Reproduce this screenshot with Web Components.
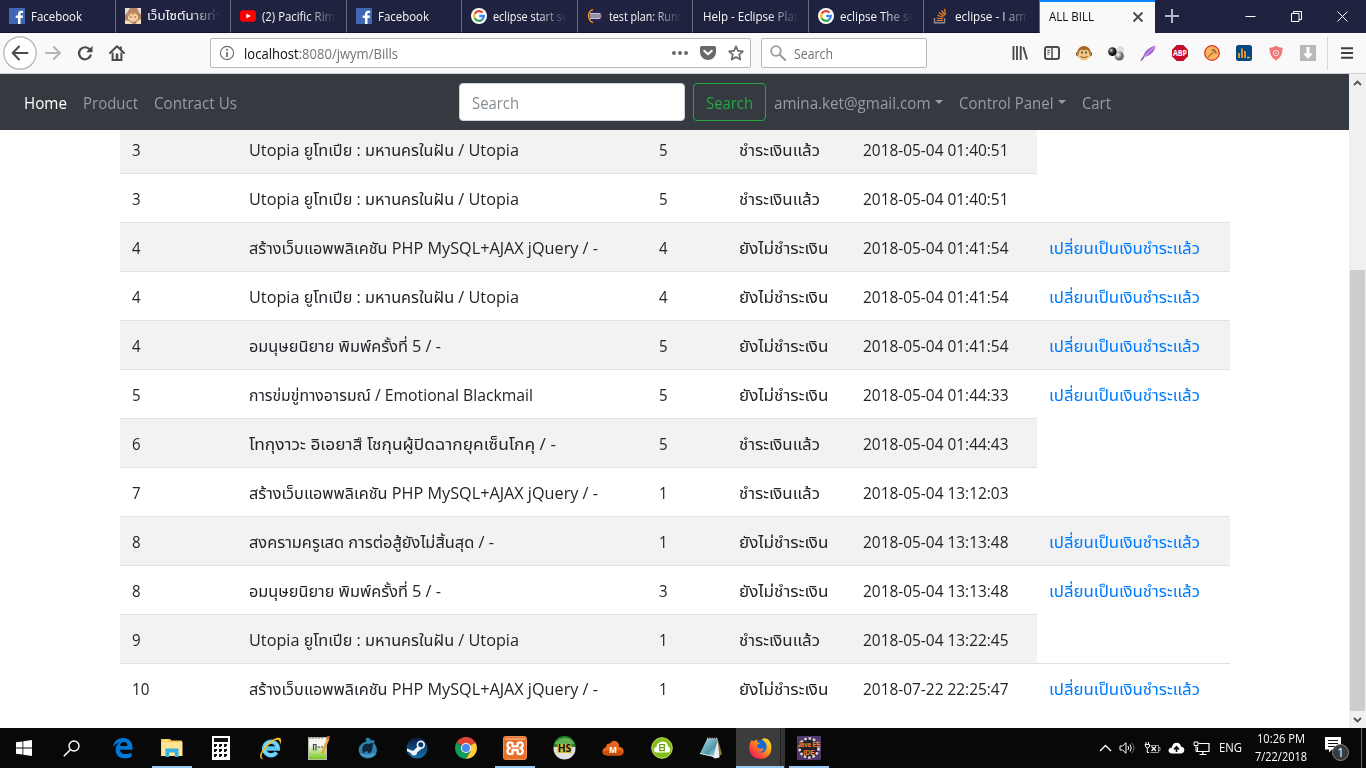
<!DOCTYPE html>
<html lang="th">
<head>
<meta charset="utf-8">
<title>ALL BILL</title>
<style>
html,body{margin:0;height:100%;overflow:hidden;background:#fff}
body{font-family:"Open Sans","Noto Sans","Noto Sans Thai",sans-serif}
</style>
</head>
<body>
<app-desktop></app-desktop>
<script>
const G = '<circle cx="8" cy="8" r="8" fill="#fff"/><g fill="none" stroke-width="2.3"><path d="M11.5 4.6A4.9 4.9 0 0 0 3.7 5.7" stroke="#ea4335"/><path d="M3.7 5.7a4.9 4.9 0 0 0 0 4.6" stroke="#fbbc05"/><path d="M3.7 10.3a4.9 4.9 0 0 0 7.5 1.3" stroke="#34a853"/><path d="M11.2 11.6A4.8 4.8 0 0 0 12.8 8H8.2" stroke="#4285f4"/></g>';
const FB = '<rect width="16" height="16" fill="#4267b2"/><path d="M9 16V10H6.700V7.600H9V6c0-2.100 1.300-3.300 3.300-3.300.8 0 1.400.1 1.800.1V5h-1.300c-1 0-1.300.4-1.300 1.200v1.400H14L13.600 10h-2.100v6z" fill="#fff"/>';
// name: [width, height, viewBox, markup]
const ICONS = {
 fb:[16,16,'0 0 16 16',FB],
 google:[16,16,'0 0 16 16',G],
 girl:[16,16,'0 0 16 16','<rect width="16" height="16" fill="#b98262"/><path d="M0 0h5L2 5 0 7z M16 0h-4l3 6h1z" fill="#e9ded4"/><path d="M3 6q5-5 10 0v5q-5 6-10 0z" fill="#f3cf9d"/><path d="M3 8q0-6 5-6t5 6l-3-3-2 2-2-2-3 4z" fill="#bd8560"/><path d="M5 9h1.500M9.500 9H11" stroke="#663c2c" stroke-width="1.200"/><path d="M0 12l4 1 4 3H0z M16 11l-4 2-1 3h5z" fill="#eee0c0"/>'],
 yt:[16,16,'0 0 16 16','<rect y="2.200" width="16" height="11.600" rx="3" fill="#f00"/><path d="M6.300 5.400L10.800 8l-4.500 2.600z" fill="#fff"/>'],
 ecl:[16,16,'0 0 16 16','<path d="M6 1.500A7 7 0 0 0 6 14.500" fill="none" stroke="#f7941e" stroke-width="1.500"/><circle cx="8.700" cy="8" r="6.300" fill="#2c2255"/><path d="M3 5.800h10.500M2.500 8h12M3 10.200h10.500" stroke="#fff" stroke-width="1.200"/>'],
 so:[16,16,'0 0 16 16','<path d="M1.500 10v4.800h10V10" fill="none" stroke="#8b8f93" stroke-width="1.400"/><path d="M3.500 12.500h6.200M3.700 10l6 .8M4.400 7.300l5.700 2M6 4.500l4.800 3.800M8.500 2.400l3.400 5M11.500 .8l1 5.800" stroke="#f48024" stroke-width="1.200"/>'],
 close:[12,12,'0 0 12 12','<path d="M1.500 1.500l9 9M10.500 1.500l-9 9" stroke="#4a4a4f" stroke-width="1.800"/>'],
 plus:[16,16,'0 0 16 16','<path d="M8 1v14M1 8h14" stroke="#b9b9c5" stroke-width="2"/>'],
 min:[11,11,'0 0 11 11','<path d="M.5 5.500h10" stroke="#fff"/>'],
 restore:[11,11,'0 0 11 11','<path d="M.5 2.500h7.500v8H.5zM2.500 2.500v-2h8v8H8" fill="none" stroke="#fff"/>'],
 wclose:[11,11,'0 0 11 11','<path d="M.5.5l10 10M10.500.5l-10 10" stroke="#fff" stroke-width="1"/>'],
 back:[34,34,'0 0 34 34','<circle cx="17" cy="17" r="16.200" fill="#fff" stroke="#b1b1b3" stroke-width="1.200"/><path d="M24.500 17H10M16 10.500L9.700 17l6.300 6.500" fill="none" stroke="#4a4a4f" stroke-width="2" stroke-linecap="round" stroke-linejoin="round"/>'],
 fwd:[16,16,'0 0 16 16','<path d="M1 8h13.500M8.800 2L15 8l-6.200 6" fill="none" stroke="#b5b5b7" stroke-width="2" stroke-linecap="round" stroke-linejoin="round"/>'],
 reload:[16,16,'0 0 16 16','<path d="M12.800 4.600A6 6 0 1 0 13.900 9.500" fill="none" stroke="#4a4a4f" stroke-width="2.200"/><path d="M15.500.8v6.400H9.200z" fill="#4a4a4f"/>'],
 home:[16,16,'0 0 16 16','<path d="M1 8L8 1.300 15 8" fill="none" stroke="#4a4a4f" stroke-width="2" stroke-linecap="round" stroke-linejoin="round"/><path d="M3.600 7.500v7.500h8.800V7.500M11.800 1.500v3" fill="none" stroke="#4a4a4f" stroke-width="2"/><path d="M6.700 8.500h2.600v6H6.700z" fill="#4a4a4f"/>'],
 info:[16,16,'0 0 16 16','<circle cx="8" cy="8" r="6.600" fill="none" stroke="#6a6a6c" stroke-width="1.100"/><path d="M8 7v5" stroke="#6a6a6c" stroke-width="1.700"/><circle cx="8" cy="4.700" r="1" fill="#6a6a6c"/>'],
 dots:[16,16,'0 0 16 16','<g fill="#68686a"><circle cx="2" cy="8" r="2"/><circle cx="8" cy="8" r="2"/><circle cx="14" cy="8" r="2"/></g>'],
 pocket:[16,16,'0 0 16 16','<path d="M1.500 1h13Q16 1 16 2.500V7a8 8 0 0 1-16 0V2.500Q0 1 1.500 1z" fill="#68686a"/><path d="M4.200 5.700L8 9.300l3.800-3.600" fill="none" stroke="#fff" stroke-width="2" stroke-linecap="round" stroke-linejoin="round"/>'],
 star:[16,16,'0 0 16 16','<path d="M8 1.300l2 4.500 4.900.5-3.700 3.300 1.100 4.900L8 12l-4.300 2.500 1.100-4.900L1.100 6.300 6 5.800z" fill="none" stroke="#68686a" stroke-width="1.700" stroke-linejoin="round"/>'],
 mag:[16,16,'0 0 16 16','<circle cx="6" cy="6" r="4.800" fill="none" stroke="#9a9a9c" stroke-width="1.800"/><path d="M9.500 9.500l5.700 5.500" stroke="#9a9a9c" stroke-width="2" stroke-linecap="round"/>'],
 lib:[16,16,'0 0 16 16','<path d="M1.500 1v14M5 1v14M8.700 1v14M11.300 2l3.700 12.600" stroke="#4a4a4f" stroke-width="1.900"/>'],
 side:[16,16,'0 0 16 16','<rect x="1" y="2" width="14" height="12" rx="2.200" fill="none" stroke="#4a4a4f" stroke-width="2"/><path d="M8 2v12" stroke="#4a4a4f" stroke-width="1.500"/><path d="M3.300 5.200H6M3.300 7.300H6M3.300 9.400H5" stroke="#4a4a4f"/>'],
 monkey:[16,16,'0 0 16 16','<circle cx="2.300" cy="9" r="2" fill="#d99b55" stroke="#80501c"/><circle cx="13.700" cy="9" r="2" fill="#d99b55" stroke="#80501c"/><circle cx="8" cy="7.500" r="6.600" fill="#a8692a"/><path d="M3.200 6.500q1.500-3 4.800-1 3.300-2 4.800 1l1.200 4.500q-1.500 4.500-6 4.500T2 11z" fill="#f0c98a"/><path d="M6 6.500v2M10 6.500v2" stroke="#333" stroke-width="1.500"/><path d="M4.500 11.500q3.500 2.500 7 0" fill="none" stroke="#8c501c"/>'],
 balls:[16,16,'0 0 16 16','<defs><radialGradient id="a" cx=".35" cy=".35"><stop stop-color="#ddd"/><stop offset=".5" stop-color="#444"/><stop offset="1" stop-color="#111"/></radialGradient><radialGradient id="b" cx=".35" cy=".35"><stop stop-color="#fff"/><stop offset="1" stop-color="#666"/></radialGradient></defs><circle cx="12.500" cy="4.500" r="3.500" fill="#ddd"/><circle cx="11.300" cy="11" r="4.600" fill="url(#b)"/><circle cx="4.400" cy="6.600" r="4.300" fill="url(#a)"/>'],
 feather:[16,16,'0 0 16 16','<path d="M15.500.5Q15 6 11 9t-8 3.500Q4 7 8 4t7.500-3.500z" fill="#a367cf"/><path d="M1 15.500L14.500 1.500" stroke="#e0bcf5"/><path d="M1 15.500l3-3.800" stroke="#7843a8" stroke-width="1.300"/>'],
 abp:[16,16,'0 0 16 16','<path d="M4.700 0h6.600L16 4.700v6.600L11.300 16H4.700L0 11.300V4.700z" fill="#c70d2c" /><text x="8" y="11" text-anchor="middle" textLength="14" lengthAdjust="spacingAndGlyphs" font-size="8.200" font-weight="700" fill="#fff">ABP</text>'],
 hammer:[16,16,'0 0 16 16','<circle cx="8" cy="8" r="7.300" fill="#fcb65a" stroke="#d93831" stroke-width="1.300"/><path d="M4 12l6-5.500" stroke="#b47b3d" stroke-width="1.500"/><path d="M7.500 5.300l2.500-.6 2.500 3.800" fill="none" stroke="#9b6c41" stroke-width="1.600"/>'],
 stats:[16,16,'0 0 16 16','<rect width="16" height="16" rx="2.500" fill="#064682"/><path d="M3 13V8M6 13V3.500M9 13V6M11 12.500h3" stroke="#ffa41b" stroke-width="1.700"/>'],
 shield:[16,16,'0 0 16 16','<path d="M8 .8q3 2 6.500 2Q15 11.500 8 15.500 1 11.500 1.500 2.800 5 2.800 8 .8z" fill="#f27778"/><circle cx="8" cy="8" r="2.800" fill="none" stroke="#fbd5d5"/><path d="M6.500 6.500l3 3" stroke="#fbd5d5"/>'],
 down:[16,16,'0 0 16 16','<rect width="16" height="16" fill="#b8b8b8"/><path d="M6.500 2h3v6.500H13L8 14 3 8.500h3.500z" fill="#fff"/>'],
 menu:[14,14,'0 0 14 14','<path d="M1 2.200h12M1 7h12M1 11.800h12" stroke="#3f3f43" stroke-width="2"/>'],
 up:[9,6,'0 0 9 6','<path d="M1 5l3.500-3.400L8 5" fill="none" stroke="#505050" stroke-width="1.800"/>'],
 dn:[9,6,'0 0 9 6','<path d="M1 1l3.500 3.400L8 1" fill="none" stroke="#505050" stroke-width="1.800"/>'],
 win:[16,16,'0 0 16 16','<path d="M0 2.300l6.500-.9v6.200H0zM7.300 1.300L16 0v7.600H7.300zM0 8.400h6.500v6.200L0 13.700zM7.300 8.400H16V16l-8.700-1.300z" fill="#fff"/>'],
 find:[17,17,'0 0 17 17','<circle cx="11" cy="6" r="5" fill="none" stroke="#fff" stroke-width="1.400"/><path d="M7.300 9.700L.8 16.200" stroke="#fff" stroke-width="1.500"/>'],
 edge:[22,22,'0 0 22 22','<path d="M1 10.200C1.600 4.800 5.200 1 11.200 1c5.800 0 9.300 4 9.300 9.300v2.400H8c.2 3 2.600 4.400 5.600 4.400 2.200 0 4.200-.6 5.900-1.700v4.300c-1.900 1.100-4.200 1.600-6.600 1.600-5.500 0-9.300-3-9.300-8.400 0-3.400 1.900-6.300 5-7.800C5.500 5.900 2.800 7.300 1 10.200zM8.100 8.900h7.300c0-2.200-1.100-3.800-3.500-3.800-2.300 0-3.600 1.800-3.800 3.800z" fill="#0078d7"/>'],
 folder:[22,20,'0 0 22 20','<path d="M0 1h9l1.500 1.500H21V18H0z" fill="#f5c84c"/><path d="M.5 4h21v14H.5z" fill="#ffe594"/><path d="M2 2.300h5" stroke="#fff2bd"/><path d="M4.500 19v-8.500h13V19h-3.700v-4.500H8.200V19z" fill="#35b2e5"/>'],
 calc:[18,24,'0 0 18 24','<rect width="18" height="24" fill="#fff"/><path d="M2 2h14v4H2z" fill="#111"/><g fill="#111"><path d="M2 8h3v2H4v1H2zM7 8h3v2H9v1H7zM12 8h3v2h-1v1h-2zM2 13h3v2H4v1H2zM7 13h3v2H9v1H7zM12 13h3v2h-1v1h-2zM2 18h3v2H4v1H2zM7 18h3v2H9v1H7zM12 18h3v2h-1v1h-2z"/></g>'],
 ie:[23,23,'0 0 23 23','<path d="M17.500 15.500a6.800 6.800 0 1 1 1.300-4H7" fill="none" stroke="#5bc7f4" stroke-width="4.400"/><path d="M17.500 15.500a6.800 6.800 0 1 1 1.300-4" fill="none" stroke="#a9e4fb" stroke-width="1"/><path d="M4 22.500Q-2 21 4 12 11 3 18 .8q5-1 4 4-.5 2-1 3 .3-5-3-5Q14 3.300 7 11T4 22.500z" fill="#f5bd1d"/>'],
 npp:[22,24,'0 0 22 24','<defs><linearGradient id="n" x2="0" y2="1"><stop offset=".35" stop-color="#f4f6ee"/><stop offset="1" stop-color="#72cb11"/></linearGradient></defs><rect x=".5" y="1.500" width="18" height="22" fill="url(#n)" stroke="#b8bcb0"/><path d="M2 1v2M5 1v2M8 1v2M11 1v2M14 1v2" stroke="#777"/><path d="M5.500 14.500V8M5.500 8.500h2.500v6M9.500 11h2.500M13 11h2" stroke="#444" stroke-width="1.200" fill="none"/><path d="M20.500 2l-6.500 16" stroke="#e8a532" stroke-width="2.500"/><path d="M20.600 0l-.8 3" stroke="#d85a50" stroke-width="2.600"/>'],
 water:[20,22,'0 0 20 22','<path d="M3.500 7Q0 10 .8 14.500 3 21.500 10 21.500q8.500-.5 9-8.500 0-4-3-7 1-1 0-3-2 1-3.500-.5Q10-.5 7.500 2q1 1 .8 2.500Q5 5 3.500 7z" fill="#2c83ad"/><path d="M5 9q2-3 5.500-2 2.500-1.200 5-1-1 2-1 4.500-.5 5.500-4 5.500-1 0-1-2-3 0-4 2.500Q3 13 5 9z" fill="#10263b"/><path d="M3 17q6 4 14 0" fill="none" stroke="#58a9ca" stroke-width="1.500"/>'],
 steam:[22,22,'0 0 22 22','<defs><linearGradient id="s" x2="0" y2="1"><stop stop-color="#071a3d"/><stop offset="1" stop-color="#1772ad"/></linearGradient></defs><circle cx="11" cy="11" r="10.600" fill="url(#s)"/><circle cx="14.800" cy="7.800" r="3.400" fill="none" stroke="#eef3f8" stroke-width="1.700"/><path d="M1 11.500l6 2.500 5.300-5L16 11.500l-5 4q0 3-3 3-2.400 0-3.200-2.500L1 14.300z" fill="#eef3f8"/>'],
 chrome:[22,22,'0 0 22 22','<path d="M11 11L1.500 5.500A11 11 0 0 1 20.500 5.500z" fill="#e04436"/><path d="M11 11L1.500 5.500A11 11 0 0 0 11 22l4.500-8z" fill="#139b58"/><path d="M11 11L20.500 5.500A11 11 0 0 1 11 22l4.500-8z" fill="#fbce3c"/><path d="M11 6h9.800" stroke="#e04436"/><circle cx="11" cy="11" r="5.100" fill="#f5f5f5"/><circle cx="11" cy="11" r="4" fill="#4688f1"/>'],
 xampp:[24,24,'0 0 24 24','<rect x=".5" y=".5" width="23" height="23" rx="2" fill="#e8702a" stroke="#f08c50"/><path d="M2 3h20" stroke="#f8b084" stroke-width="1.500"/><path d="M9.500 7Q4.500 5 4.500 9q0 2.500 2.300 3.200Q4.500 13 4.500 15.500q0 3.500 5 2.200V14h5.200v3.700q5 1.300 5-2.200 0-2.500-2.400-3.300Q19.700 11.500 19.700 9q0-4-5-2v3.400H9.500z" fill="none" stroke="#fff" stroke-width="2.300" stroke-linejoin="round"/>'],
 hs:[23,23,'0 0 23 23','<circle cx="11.500" cy="11.500" r="11" fill="#dfe0df"/><path d="M.5 10a11 11 0 0 1 22 0z" fill="#258426"/><path d="M1.500 7Q5 1.500 11.500 1T21.500 7z" fill="#65b356"/><path d="M4.500 7h14v9h-14z" fill="#d8b934"/><text x="11.500" y="15.300" text-anchor="middle" textLength="13.500" lengthAdjust="spacingAndGlyphs" font-size="10.500" font-weight="700" fill="#111">HS</text>'],
 moo:[22,18,'0 0 22 18','<path d="M5 16.500Q0 16 .5 12 .8 9 4 8.200 4 4.500 8 4.600 10 .8 14 2.200q3.300 1.300 3 5.500 4.600.5 4.700 4.500t-4 4.300z" fill="#e5671d"/><path d="M1 12.500q8-2 20 0 0 4-4 4H5Q1.500 16 1 12.500z" fill="#ca4d10"/><text x="11" y="13.500" text-anchor="middle" font-size="8.500" font-weight="700" fill="#fff">M</text>'],
 bs:[22,22,'0 0 22 22','<circle cx="11" cy="11" r="10.300" fill="#82bd18" stroke="#bce261"/><path d="M5.500 15.500Q2.500 15 3 12.300q.5-2.300 2.500-2.300 0-4 3.500-4.500 2-1.500 5-.5T17 9.500q2.300.5 2.200 3.200Q19 15.500 16.500 15.500z" fill="#fff"/><path d="M8.700 7.500h4.600V13.700H8.700zM8.700 10.600h4.600" fill="none" stroke="#619e08" stroke-width="1.200"/>'],
 note:[24,24,'0 0 24 24','<defs><linearGradient id="p" x2="1" y2="1"><stop stop-color="#b5e2ee"/><stop offset=".6" stop-color="#4f97aa"/><stop offset="1" stop-color="#c8e8ed"/></linearGradient></defs><path d="M19 4l4 14-5 4z" fill="#8e7146"/><path d="M18.500 3.500l2 18-4.500 1-3-2z" fill="#e9eef0"/><path d="M8 3h11l-4.500 17.500L1 17.500z" fill="url(#p)"/><path d="M8 2.500h11" stroke="#c1c7ca" stroke-width="1.600" stroke-dasharray="1.500 .7"/><path d="M1 17.500l13.500 3" stroke="#ddeef2"/>'],
 ff:[24,24,'0 0 24 24','<defs><linearGradient id="f" x1="1" x2="0" y2="1"><stop stop-color="#fff235"/><stop offset=".4" stop-color="#ff9a16"/><stop offset=".75" stop-color="#ff3344"/><stop offset="1" stop-color="#e60b85"/></linearGradient></defs><circle cx="12.500" cy="12" r="8" fill="#1868d8"/><path d="M3.500 4q1 1 2.500 1.300Q7.500 3.500 9.500 3.500q-1 1.500-.5 2.500l3 1.500-3 1.500q-.5 3 3 3.700 2.500.5 4-1-1 4.500-5 4 3 2 6-.5 3-4 .5-8.500-1-2-4-3 2-2.500 6-.7 3.500 2.500 4 8Q23.300 22.500 12.500 23 2 22.500 1.200 12.500 1 7.500 3.500 4z" fill="url(#f)"/>'],
 jee:[24,24,'0 0 24 24','<rect width="24" height="24" rx="1" fill="#53376d"/><circle cx="12" cy="12" r="9.500" fill="#222" stroke="#d7d7dc" stroke-width="2.600" stroke-dasharray="2.600 1.800"/><path d="M1 6h22v5.500H1zM6 12h12v6H6z" fill="#2a2030" opacity=".7"/><g font-family="Liberation Sans" font-weight="700" fill="#f28a25" text-anchor="middle"><text x="12" y="10.800" textLength="23" lengthAdjust="spacingAndGlyphs" font-size="6.400">Java EE</text><text x="12" y="18.500" textLength="11.500" lengthAdjust="spacingAndGlyphs" font-size="6.400">IDE</text></g>'],
 chev:[13,8,'0 0 13 8','<path d="M1 7l5.500-5.500L12 7" fill="none" stroke="#fff" stroke-width="1.400"/>'],
 vol:[17,14,'0 0 17 14','<path d="M1 5h2.500L7 1.700v10.600L3.500 9H1z" fill="none" stroke="#fff"/><path d="M9 5q1.300 2 0 4M11 3.500q2.500 3.500 0 7" fill="none" stroke="#fff"/><path d="M13 2q4 5 0 10" fill="none" stroke="#777"/>'],
 bat:[17,14,'0 0 17 14','<path d="M2 1v2M4.500 1v2M1 3.500h4.500V5q0 1.500-2 2-2-.5-2-2zM3.300 7v4.500H5" fill="none" stroke="#fff"/><path d="M6.500 4.500h8v7h-8M14.500 6.500h1.500v3h-1.500" fill="none" stroke="#999"/><path d="M7.500 5.500l4.500 4.500M12 5.500L7.500 10" stroke="#fff" stroke-width="1.200"/>'],
 cloud:[17,12,'0 0 17 12','<path d="M4 11.500Q.5 11.300.5 8.300 1 5.500 4 5.500 4.500 1 8.500.8q4 .2 4.500 4 3.300.3 3.300 3.500-.2 3-3.500 3.200z" fill="#fff"/><path d="M8.500 10V6M6 7.500l2.500-2.700L11 7.500" stroke="#111" fill="none" stroke-width="1.700"/>'],
 net:[17,14,'0 0 17 14','<path d="M5.500 2.500h10.500v8H4.500V6M9.800 10.500v3M6.500 13.500h7" fill="none" stroke="#fff" stroke-width="1.200"/><path d="M1 1h4v3.500H1zM3 4.500v6h2" fill="none" stroke="#fff"/>'],
 msg:[26,26,'0 0 26 26','<path d="M1 2h16v12.500H8L5 17.500v-3H1z" fill="#fff"/><path d="M4 5.500h10M4 8.500h10M4 11.500h7" stroke="#111" stroke-width="1.100"/><circle cx="16.500" cy="17.500" r="8" fill="#3b3b3b" stroke="#858585"/><text x="16.500" y="22" text-anchor="middle" font-size="12.500" fill="#fff">1</text>']
};
const define = (tag, css, html, after) => customElements.define(tag, class extends HTMLElement {
  connectedCallback(){
    if (this.shadowRoot) return;
    const r = this.attachShadow({mode:'open'});
    r.innerHTML = `<style>*{box-sizing:border-box}${css}</style>` + (typeof html === 'function' ? html(this) : html);
    if (after) after(this, r);
  }
});
const ic = (n, extra='') => `<ui-icon name="${n}" ${extra}></ui-icon>`;
const fit = (w, t) => `<fit-text w="${w}">${t}</fit-text>`;

define('ui-icon', ':host{display:block;flex:none;line-height:0}svg{display:block;overflow:visible;font-family:"Open Sans",sans-serif}', el => {
  const [w,h,vb,m] = ICONS[el.getAttribute('name')];
  return `<svg width="${w}" height="${h}" viewBox="${vb}">${m}</svg>`;
});

define('browser-tab', `:host{display:flex;align-items:center;box-sizing:border-box;width:115.56px;height:33px;padding-left:9px;border-right:1px solid #6b6c7e;flex:none;font-size:12px;color:#f9f9fa;overflow:hidden;border-bottom:1px solid #12132a}
  :host([active]){background:#f9f9fa;color:#0c0c0d;border:0;border-top:2px solid #0a84ff;padding-bottom:2px}
  :host([plain]){padding-left:8.500px}
  .t{margin-left:6px;flex:1;overflow:hidden;margin-right:10px;padding:5px 0}
  :host([plain]) .t{margin-left:1px}
  :host([fade]) .t{-webkit-mask-image:linear-gradient(90deg,#000 calc(100% - 30px),transparent);mask-image:linear-gradient(90deg,#000 calc(100% - 30px),transparent)}
  .x{margin-right:11.500px}`,
  el => (el.getAttribute('icon') ? ic(el.getAttribute('icon')) : '') +
    `<div class="t">${fit(el.getAttribute('w'), el.getAttribute('label'))}</div>` + (el.hasAttribute('active') ? ic('close','class="x"') : ''));

define('tab-strip', `:host{display:flex;height:33px;background:#202340}
  .new{margin:8px 0 0 8.500px}.ctl{display:flex;gap:35px;margin:11px 18px 0 auto}`,
  [['fb',51,'Facebook',''],['girl',74,'เว็บไซต์นายท่า','fade'],['yt',73,'(2) Pacific Rim','fade'],['fb',51,'Facebook',''],['google',75,'eclipse start se','fade'],['ecl',75,'test plan: Runn','fade'],['',95,'Help - Eclipse Plat','fade plain'],['google',75,'eclipse The se','fade'],['so',71,'eclipse - I am','fade'],['',45,'ALL BILL','plain active']]
  .map(([i,w,t,a]) => `<browser-tab icon="${i}" w="${w}" label="${t}" ${a}></browser-tab>`).join('') +
  ic('plus','class="new"') + `<div class="ctl">${ic('min')}${ic('restore')}${ic('wclose')}</div>`);

define('nav-toolbar', `:host{display:flex;align-items:center;box-sizing:border-box;height:41px;background:#f9f9fa;border-bottom:1px solid #ccccce;padding-left:3px;font-size:13.600px;color:#0c0c0d}
  .nav{display:flex;align-items:center;gap:16px;width:207px}.nav :first-child{margin-right:-8px}
  .box{display:flex;align-items:center;height:30px;background:#fff;border:1px solid #b9b9bb;border-radius:2px}
  .box fit-text{margin-top:1px}
  .url{width:541px;padding:0 6px 0 8px;margin-right:10px;gap:9px}.url i{flex:1}.acts{display:flex;gap:12px}
  .find{width:166px;padding-left:8px;gap:7.500px;color:#737375}
  .ext{display:flex;gap:16px;margin-left:85px}.sep{width:1px;height:33px;background:#d7d7db;margin:0 12px 0 11px}`,
  `<div class="nav">${['back','fwd','reload','home'].map(n=>ic(n)).join('')}</div>
  <div class="box url">${ic('info')}${fit(154,'localhost<b style="font-weight:400;color:#737375">:8080/jwym/Bills</b>')}<i></i><div class="acts">${ic('dots')}${ic('pocket')}${ic('star')}</div></div>
  <div class="box find">${ic('mag')}${fit(39,'Search')}</div>
  <div class="ext">${['lib','side','monkey','balls','feather','abp','hammer','stats','shield','down'].map(n=>ic(n)).join('')}</div><div class="sep"></div>${ic('menu')}`);

define('site-navbar', `:host{display:flex;align-items:center;box-sizing:border-box;height:56px;background:#343a40;padding:0 0 0 24px;font-size:15.600px;color:#999c9f;position:relative;z-index:1}
  fit-text{margin-top:2px}
  .l{display:flex;gap:16px;width:435px}.on{color:#fff}
  .in{width:226px;height:38px;border:1px solid #ced4da;border-radius:4px;background:#fff;color:#848b92;display:flex;align-items:center;padding-left:12px;margin-right:8px}
  .btn{width:73px;height:38px;border:1px solid #28a745;border-radius:4px;color:#28a745;display:flex;align-items:center;justify-content:center;margin-right:8px}
  .r{display:flex;gap:16px}.d{display:flex;align-items:center;gap:4.600px}.d::after{content:"";border:4.800px solid transparent;border-top-color:currentColor;border-bottom:0;margin-bottom:1px}`,
  `<div class="l"><span class="on">${fit(43,'Home')}</span>${fit(55,'Product')}${fit(83,'Contract Us')}</div>
  <div class="in">${fit(47,'Search')}</div><div class="btn">${fit(47,'Search')}</div>
  <div class="r"><div class="d">${fit(156.500,'amina.ket@gmail.com')}</div><div class="d" style="margin-left:-.6px">${fit(94.500,'Control Panel')}</div>${fit(29,'Cart')}</div>`);

const U=[270,'Utopia ยูโทเปีย : มหานครในฝัน / Utopia'], P=[349,'สร้างเว็บแอพพลิเคชัน PHP MySQL+AJAX jQuery / -'], A=[192,'อมนุษยนิยาย พิมพ์ครั้งที่ 5 / -'];
const ROWS=[[3,U,5,1,'2018-05-04 01:40:51'],[3,U,5,1,'2018-05-04 01:40:51'],[4,P,4,0,'2018-05-04 01:41:54'],[4,U,4,0,'2018-05-04 01:41:54'],[4,A,5,0,'2018-05-04 01:41:54'],
 [5,[284,'การข่มขู่ทางอารมณ์ / Emotional Blackmail'],5,0,'2018-05-04 01:44:33'],[6,[307,'โทกุงาวะ อิเอยาสึ โชกุนผู้ปิดฉากยุคเซ็นโกคุ / -'],5,1,'2018-05-04 01:44:43'],[7,P,1,1,'2018-05-04 13:12:03'],
 [8,[245,'สงครามครูเสด การต่อสู้ยังไม่สิ้นสุด / -'],1,0,'2018-05-04 13:13:48'],[8,A,3,0,'2018-05-04 13:13:48'],[9,U,1,1,'2018-05-04 13:22:45'],[10,P,1,0,'2018-07-22 22:25:47']];
define('bill-row', `:host{display:grid;grid-template-columns:117px 410px 80px 124.5px 185.500px 193px;height:49px;font-size:15.600px;line-height:24px;color:#212529}
  div{border-top:1px solid #dee2e6;padding:13px 0 0 12px;white-space:nowrap}.link{color:#007bff}
  div:first-child{padding-left:11px}
  :host([odd]) div{background:#f2f2f2}`,
  el => { const [id,t,q,paid,dt]=ROWS[+el.getAttribute('index')];
    return `<div>${fit(id>9?17.500:8.600,id)}</div><div>${fit(...t)}</div><div>${fit(8.600,q)}</div><div>${paid?fit(81,'ชำระเงินแล้ว'):fit(89.500,'ยังไม่ชำระเงิน')}</div><div>${fit(145.500,dt)}</div>` + (paid?'':`<div class="link">${fit(151,'เปลี่ยนเป็นเงินชำระแล้ว')}</div>`);
  });
define('bill-table', ':host{display:block;width:1110px;margin:-6px 0 0 119.500px}', ROWS.map((r,i)=>`<bill-row index="${i}" ${i%2?'':'odd'}></bill-row>`).join(''));

define('scroll-bar', `:host{display:flex;flex-direction:column;align-items:center;box-sizing:border-box;width:17px;background:#f0f0f0;padding:6px 0 5px}
  .thumb{width:15px;height:441px;background:#cdcdcd;margin:184px 0 6px}`, `${ic('up')}<div class="thumb"></div>${ic('dn')}`);

define('task-item', `:host{display:flex;align-items:center;justify-content:center;width:49px;height:40px;position:relative}
  :host([wide]){width:48px}:host([run])::after{content:"";position:absolute;bottom:0;left:4.500px;width:40px;height:2px;background:#99c9f5}
  :host([cur]){background:linear-gradient(90deg,#3c3c3c 44px,#222 44px,#222 45px,#353535 45px)}:host([cur])::after{left:0;width:48px}`,
  el => ic(el.getAttribute('icon')));
define('task-bar', `:host{display:flex;height:40px;background:#080808;color:#fff;font-size:12px;line-height:18px}
  .gap{width:2.500px}.tray{margin-left:auto;display:flex;align-items:center}.tray ui-icon{margin-right:7.500px}
  .tray ui-icon:nth-child(5){margin-right:9.500px}
  .clock{display:flex;flex-direction:column;align-items:center;width:54px;margin:0 16px 0 12px;height:37px}.end{width:1px;height:40px;background:#6a6a6a;margin-right:4px}`,
  `<task-item wide icon="win"></task-item><task-item wide icon="find" style="position:relative;left:-1px"></task-item><span class="gap"></span>` +
  [['edge'],['folder','run'],['calc'],['ie'],['npp'],['water'],['steam'],['chrome'],['xampp','run'],['hs'],['moo'],['bs'],['note'],['ff','run cur'],['jee','run']].map(([n,a=''])=>`<task-item icon="${n}" ${a}></task-item>`).join('') +
  `<div class="tray">${['chev','vol','bat','cloud','net'].map(n=>ic(n)).join('')}${fit(23,'ENG')}<div class="clock">${fit(48,'10:26 PM')}${fit(52,'7/22/2018')}</div>${ic('msg','style="margin-right:11px"')}<span class="end"></span></div>`);

define('app-desktop', `:host{display:flex;flex-direction:column;width:1366px;height:768px;overflow:hidden}
  .view{display:flex;height:654px;overflow:hidden;background:#fff}.page{flex:1;overflow:hidden}`,
  `<tab-strip></tab-strip><nav-toolbar></nav-toolbar><div class="view"><div class="page"><site-navbar></site-navbar><bill-table></bill-table></div><scroll-bar></scroll-bar></div><task-bar></task-bar>`);

// Condenses a line of text to the advance width given in its w attribute.
define('fit-text', ':host{display:inline-block;white-space:nowrap;flex:none}span{display:inline-block;transform-origin:0 50%}', '<span><slot></slot></span>', (el, r) => {
  const s = r.querySelector('span'), w = +el.getAttribute('w');
  el.style.width = w + 'px';
  s.style.transform = `scaleX(${w / s.getBoundingClientRect().width})`;
});
</script>
</body>
</html>
